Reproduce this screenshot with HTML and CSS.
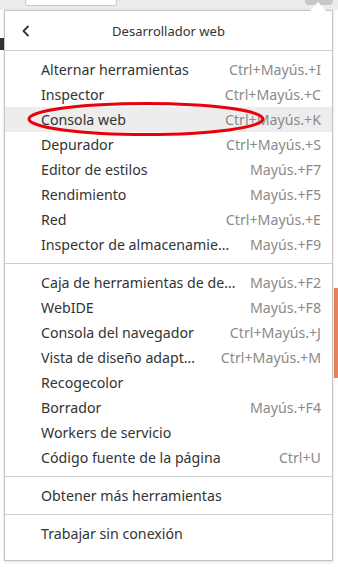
FILE: index.html
```html
<!DOCTYPE html>
<html lang="es">
<head>
    <meta charset="UTF-8">
    <meta name="viewport" content="width=device-width, initial-scale=1.0">
    <title>Desarrollador web</title>
    <link rel="stylesheet" href="styles.css">
</head>
<body>
    <div class="toolbar">
        <div class="urlbar"></div>
        <div class="toolbar-button"></div>
    </div>
    <div class="side-dark"></div>
    <div class="side-accent"></div>

    <div class="panel">
        <div class="arrow"></div>
        <div class="panel-header">
            <span class="back">
                <svg width="10" height="12" viewBox="0 0 10 12"><path d="M7 1.5 L2.5 6 L7 10.5" fill="none" stroke="#333" stroke-width="1.8" stroke-linecap="round" stroke-linejoin="round"/></svg>
            </span>
            <span class="panel-title">Desarrollador web</span>
        </div>

        <div class="menu-group">
            <div class="item"><span class="label">Alternar herramientas</span><span class="key">Ctrl+Mayús.+I</span></div>
            <div class="item"><span class="label">Inspector</span><span class="key">Ctrl+Mayús.+C</span></div>
            <div class="item hover">
                <span class="label">Consola web</span><span class="key">Ctrl+Mayús.+K</span>
                <svg class="circle" width="244" height="40" viewBox="0 0 244 40"><ellipse cx="121" cy="19" rx="117" ry="15.5" fill="none" stroke="#e8000b" stroke-width="3"/></svg>
            </div>
            <div class="item"><span class="label">Depurador</span><span class="key">Ctrl+Mayús.+S</span></div>
            <div class="item"><span class="label">Editor de estilos</span><span class="key">Mayús.+F7</span></div>
            <div class="item"><span class="label">Rendimiento</span><span class="key">Mayús.+F5</span></div>
            <div class="item"><span class="label">Red</span><span class="key">Ctrl+Mayús.+E</span></div>
            <div class="item"><span class="label">Inspector de almacenamie…</span><span class="key">Mayús.+F9</span></div>
        </div>

        <div class="menu-group">
            <div class="item"><span class="label">Caja de herramientas de de…</span><span class="key">Mayús.+F2</span></div>
            <div class="item"><span class="label">WebIDE</span><span class="key">Mayús.+F8</span></div>
            <div class="item"><span class="label">Consola del navegador</span><span class="key">Ctrl+Mayús.+J</span></div>
            <div class="item"><span class="label">Vista de diseño adapt…</span><span class="key">Ctrl+Mayús.+M</span></div>
            <div class="item"><span class="label">Recogecolor</span><span class="key"></span></div>
            <div class="item"><span class="label">Borrador</span><span class="key">Mayús.+F4</span></div>
            <div class="item"><span class="label">Workers de servicio</span><span class="key"></span></div>
            <div class="item"><span class="label">Código fuente de la página</span><span class="key">Ctrl+U</span></div>
        </div>

        <div class="menu-group">
            <div class="item"><span class="label">Obtener más herramientas</span></div>
        </div>

        <div class="menu-group last">
            <div class="item"><span class="label">Trabajar sin conexión</span></div>
        </div>
    </div>
</body>
</html>
```

FILE: styles.css
```css
body {
    margin: 0;
    width: 338px;
    height: 568px;
    overflow: hidden;
    position: relative;
    background-color: #ffffff;
    font-family: "Noto Sans", "DejaVu Sans", sans-serif;
    color: #333;
}
.toolbar {
    height: 10px;
    background-color: #ececec;
    position: relative;
}
.urlbar {
    position: absolute;
    left: 25px;
    top: -4px;
    width: 90px;
    height: 8px;
    background: #fff;
    border: 1px solid #c9c9c9;
    border-radius: 3px;
}
.toolbar-button {
    position: absolute;
    left: 305px;
    top: -4px;
    width: 28px;
    height: 9px;
    background: #c8c8c8;
    border-radius: 4px;
}
.side-dark {
    position: absolute;
    left: 0;
    top: 38px;
    width: 4px;
    height: 12px;
    background: #2f3236;
}
.side-accent {
    position: absolute;
    left: 334px;
    top: 288px;
    width: 4px;
    height: 90px;
    background: #e9815b;
}
.panel {
    position: absolute;
    left: 4px;
    top: 10px;
    width: 327px;
    height: 549px;
    background: #fff;
    border: 1px solid #c4c4c4;
    box-shadow: 0 1px 3px rgba(0,0,0,0.15);
}
.arrow {
    position: absolute;
    right: 6px;
    top: -9px;
    width: 0;
    height: 0;
    border-left: 8px solid transparent;
    border-right: 8px solid transparent;
    border-bottom: 9px solid #fff;
}
.panel-header {
    height: 39px;
    display: flex;
    align-items: center;
    justify-content: center;
    position: relative;
    border-bottom: 1px solid #cfcfcf;
}
.back {
    position: absolute;
    left: 16px;
    top: 14px;
    display: flex;
}
.panel-title {
    font-size: 13px;
    color: #333;
}
.menu-group {
    padding: 6px 0;
    border-bottom: 1px solid #cfcfcf;
}
.menu-group.last {
    border-bottom: none;
}
.item {
    height: 25px;
    display: flex;
    align-items: center;
    justify-content: space-between;
    padding: 0 11px 0 36px;
    font-size: 14.2px;
    position: relative;
}
.item.hover {
    background-color: #ededed;
}
.label {
    color: #333;
    white-space: nowrap;
}
.key {
    color: #8a8a8a;
    white-space: nowrap;
}
.circle {
    position: absolute;
    left: 20px;
    top: -7px;
}
```
